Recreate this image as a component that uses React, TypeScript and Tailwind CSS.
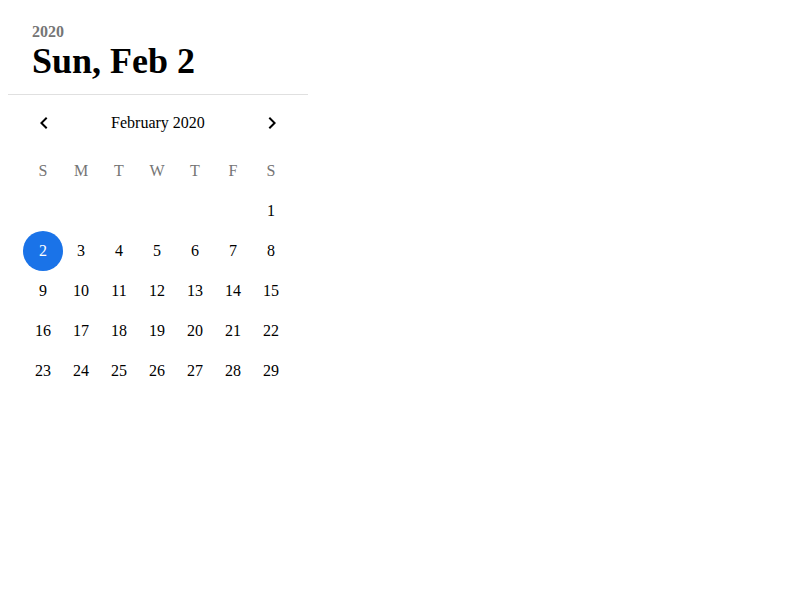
import { useState } from 'react';

const weekDays = ['S', 'M', 'T', 'W', 'T', 'F', 'S'];

function Chevron({ dir }: { dir: 'left' | 'right' }) {
  return (
    <svg width="24" height="24" viewBox="0 0 24 24" fill="currentColor">
      {dir === 'left' ? (
        <path d="M15.41 7.41 14 6l-6 6 6 6 1.41-1.41L10.83 12z" />
      ) : (
        <path d="M10 6 8.59 7.41 13.17 12l-4.58 4.59L10 18l6-6z" />
      )}
    </svg>
  );
}

export default function App() {
  const [selected, setSelected] = useState(2);

  // Feb 2020 starts on a Saturday
  const cells: (number | null)[] = [...Array(6).fill(null)];
  for (let d = 1; d <= 29; d++) cells.push(d);
  const rows: (number | null)[][] = [];
  for (let i = 0; i < cells.length; i += 7) rows.push(cells.slice(i, i + 7));

  return (
    <div className="min-h-screen bg-white font-['Liberation_Serif',serif] text-black">
      <div className="ml-2 w-[300px]">
        {/* Toolbar */}
        <div className="px-6 pt-[23px] pb-[13px] border-b border-[#e0e0e0]">
          <div className="text-[16px] font-bold leading-[18px] text-[#757575]">2020</div>
          <div className="text-[36px] font-bold leading-[40px]">Sun, Feb {selected}</div>
        </div>

        {/* Month switcher */}
        <div className="flex items-center justify-between px-6 mt-4 h-[24px]">
          <button className="flex h-6 w-6 items-center justify-center">
            <Chevron dir="left" />
          </button>
          <span className="text-[16px]">February 2020</span>
          <button className="flex h-6 w-6 items-center justify-center">
            <Chevron dir="right" />
          </button>
        </div>

        {/* Week days */}
        <div className="mt-[26px] ml-4 grid grid-cols-[repeat(7,38px)]">
          {weekDays.map((d, i) => (
            <div key={i} className="flex h-[20px] items-center justify-center text-[16px] text-[#757575]">
              {d}
            </div>
          ))}
        </div>

        {/* Days */}
        <div className="mt-[10px] ml-4">
          {rows.map((row, ri) => (
            <div key={ri} className="grid grid-cols-[repeat(7,38px)]">
              {Array.from({ length: 7 }).map((_, ci) => {
                const day = row[ci];
                return (
                  <div key={ci} className="flex h-10 items-center justify-center">
                    {day && (
                      <button
                        onClick={() => setSelected(day)}
                        className={
                          day === selected
                            ? 'flex h-10 w-10 shrink-0 items-center justify-center rounded-full bg-[#1a73e8] text-[16px] text-white'
                            : 'flex h-10 w-10 shrink-0 items-center justify-center rounded-full text-[16px]'
                        }
                      >
                        {day}
                      </button>
                    )}
                  </div>
                );
              })}
            </div>
          ))}
        </div>
      </div>
    </div>
  );
}
